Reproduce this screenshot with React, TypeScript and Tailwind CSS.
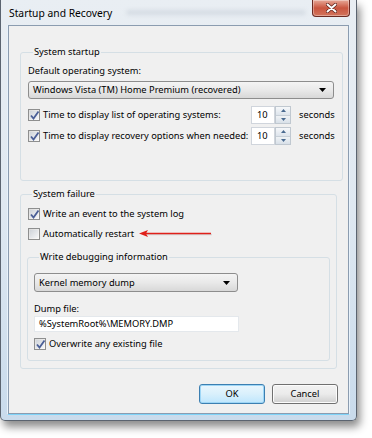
import React from "react";

const font = { fontFamily: '"Noto Sans", "Open Sans", sans-serif' };

function CheckBox({ checked }: { checked?: boolean }) {
  return (
    <span className="inline-flex h-[12px] w-[12px] shrink-0 items-center justify-center border border-[#8e8f8f] bg-gradient-to-br from-[#dcdcdc] to-[#fbfbfb]">
      <span className="flex h-[8px] w-[8px] items-center justify-center bg-gradient-to-br from-[#cfd4da] to-[#f4f5f7]">
        {checked && (
          <svg width="9" height="9" viewBox="0 0 9 9" className="overflow-visible">
            <path d="M1 4.5 L3.5 7.5 L8.5 0.5" fill="none" stroke="#4a5f97" strokeWidth="1.8" />
          </svg>
        )}
      </span>
    </span>
  );
}

function CheckRow({ checked, label, className = "" }: { checked?: boolean; label: string; className?: string }) {
  return (
    <div className={"flex items-center gap-[3px] " + className}>
      <CheckBox checked={checked} />
      <span className="whitespace-nowrap text-[9.3px] leading-none text-black">{label}</span>
    </div>
  );
}

function Combo({ value, className = "" }: { value: string; className?: string }) {
  return (
    <div
      className={
        "flex items-center justify-between rounded-[3px] border border-[#8d8d8d] bg-gradient-to-b from-[#f4f4f4] via-[#e9e9e9] to-[#d8d8d8] pl-[4px] pr-[7px] " +
        className
      }
    >
      <span className="text-[9.3px] leading-none text-black">{value}</span>
      <svg width="7" height="4" viewBox="0 0 7 4">
        <path d="M0 0 H7 L3.5 4 Z" fill="#000" />
      </svg>
    </div>
  );
}

function Spin({ value }: { value: string }) {
  return (
    <div className="flex h-[18px]">
      <div className="flex w-[24px] items-center border border-[#d0d5dc] bg-white pl-[5px] text-[9.3px] leading-none text-black">
        {value}
      </div>
      <div className="flex w-[16px] flex-col border border-[#c0c8d0]">
        <div className="flex flex-1 items-center justify-center border-b border-[#c8d0d8] bg-gradient-to-b from-[#f6f8fa] to-[#dde4ec]">
          <svg width="5" height="3" viewBox="0 0 5 3">
            <path d="M0 3 L2.5 0 L5 3 Z" fill="#4a6a90" />
          </svg>
        </div>
        <div className="flex flex-1 items-center justify-center bg-gradient-to-b from-[#f0f3f6] to-[#d8e0e8]">
          <svg width="5" height="3" viewBox="0 0 5 3">
            <path d="M0 0 L5 0 L2.5 3 Z" fill="#4a6a90" />
          </svg>
        </div>
      </div>
    </div>
  );
}

function Group({ title, className = "", children }: { title: string; className?: string; children: React.ReactNode }) {
  return (
    <fieldset className={"rounded-[3px] border border-[#d5dfe5] " + className}>
      <legend className="ml-[5px] px-[1px] text-[9.3px] leading-[12px] text-black">{title}</legend>
      {children}
    </fieldset>
  );
}

function Button({ label, focused }: { label: string; focused?: boolean }) {
  return (
    <button
      className={
        "flex h-[20px] w-[66px] items-center justify-center rounded-[3px] border text-[9.3px] leading-none text-black " +
        (focused
          ? "border-[#3c7fb1] bg-gradient-to-b from-[#eaf6fd] via-[#d9f0fc] to-[#bee6fd] shadow-[inset_0_0_0_1px_#9ed6f6]"
          : "border-[#707070] bg-gradient-to-b from-[#f2f2f2] via-[#ebebeb] to-[#cfcfcf] shadow-[inset_0_0_0_1px_#fcfcfc]")
      }
    >
      {label}
    </button>
  );
}

export default function App() {
  return (
    <div className="h-[438px] w-[372px] overflow-hidden bg-white" style={font}>
      <div className="flex h-[421px] w-[357px] flex-col rounded-b-[5px] border border-t-0 border-[#5b6470] bg-gradient-to-b from-[#e9eef3] via-[#dfe8f1] to-[#c9dbec] shadow-[3px_6px_8px_rgba(0,0,0,0.45)]">
        <div className="flex h-[25px] shrink-0 items-start justify-between pl-[8px] pr-[6px]">
          <div className="flex items-start">
            <span className="whitespace-nowrap pt-[7px] text-[10.3px] leading-[12px] text-black">Startup and Recovery</span>
            {/* blurred desktop behind the glass */}
            <div className="ml-[14px] mt-[10px] h-[5px] w-[180px] rounded-full bg-[#9aa6b4] opacity-25 blur-[2px]" />
          </div>
          <div className="flex h-[17px] w-[38px] shrink-0 items-center justify-center rounded-b-[4px] border border-t-0 border-[#6b2a22] bg-gradient-to-b from-[#e6a898] via-[#c9553f] to-[#d2745c] shadow-[inset_0_0_0_1px_rgba(255,255,255,0.35)]">
            <svg width="11" height="10" viewBox="0 0 11 10">
              <path d="M1.5 1.5 L9.5 8.5 M9.5 1.5 L1.5 8.5" stroke="#5a2018" strokeWidth="3.4" strokeLinecap="round" />
              <path d="M1.5 1.5 L9.5 8.5 M9.5 1.5 L1.5 8.5" stroke="#fff" strokeWidth="2" strokeLinecap="round" />
            </svg>
          </div>
        </div>
        <div className="mx-[7px] mb-[6px] flex flex-1 flex-col border border-[#8b9cb0] bg-[#f0f0f0] shadow-[0_1px_0_#7fd3f8,1px_0_0_#e8f2fb,-1px_0_0_#e8f2fb]">
          <div className="flex flex-1 flex-col px-[11px] pt-[20px]">
            <Group title="System startup" className="px-[7px] pb-[35px]">
              <div className="pt-[7px] text-[9.3px] leading-[12px] text-black">Default operating system:</div>
              <Combo value="Windows Vista (TM) Home Premium (recovered)" className="mt-[4px] mr-[1px] h-[18px]" />
              <div className="mt-[7px] flex items-center">
                <CheckRow checked label="Time to display list of operating systems:" className="w-[223px]" />
                <Spin value="10" />
                <span className="ml-[8px] text-[9.3px] leading-none text-black">seconds</span>
              </div>
              <div className="mt-[3px] flex items-center">
                <CheckRow checked label="Time to display recovery options when needed:" className="w-[223px]" />
                <Spin value="10" />
                <span className="ml-[8px] text-[9.3px] leading-none text-black">seconds</span>
              </div>
            </Group>
            <Group title="System failure" className="mt-[7px] px-[6px] pb-[7px]">
              <CheckRow checked label="Write an event to the system log" className="mt-[8px] ml-[1px]" />
              <div className="mt-[8px] ml-[1px] flex items-center">
                <CheckRow label="Automatically restart" />
                <svg width="74" height="10" viewBox="0 0 74 10" className="ml-[5px]">
                  <path d="M8 5.5 H73" stroke="#bbb" strokeWidth="1.5" opacity="0.5" />
                  <path d="M7 4.5 H72" stroke="#e0201a" strokeWidth="1.6" />
                  <path d="M0 4.5 L9 1 L7 4.5 L9 8 Z" fill="#e0201a" />
                </svg>
              </div>
              <Group title="Write debugging information" className="mt-[11px] px-[6px] pb-[10px]">
                <Combo value="Kernel memory dump" className="mt-[10px] h-[19px] w-[204px]" />
                <div className="mt-[11px] text-[9.3px] leading-[12px] text-black">Dump file:</div>
                <div className="mt-[1px] flex h-[16px] w-[205px] items-center border border-[#e4e8ec] bg-white pl-[4px] text-[9.3px] leading-none text-black">
                  %SystemRoot%\MEMORY.DMP
                </div>
                <CheckRow checked label="Overwrite any existing file" className="mt-[6px]" />
              </Group>
            </Group>
          </div>
          <div className="flex justify-end gap-[7px] px-[10px] pb-[9px] pt-[13px]">
            <Button label="OK" focused />
            <Button label="Cancel" />
          </div>
        </div>
      </div>
    </div>
  );
}
